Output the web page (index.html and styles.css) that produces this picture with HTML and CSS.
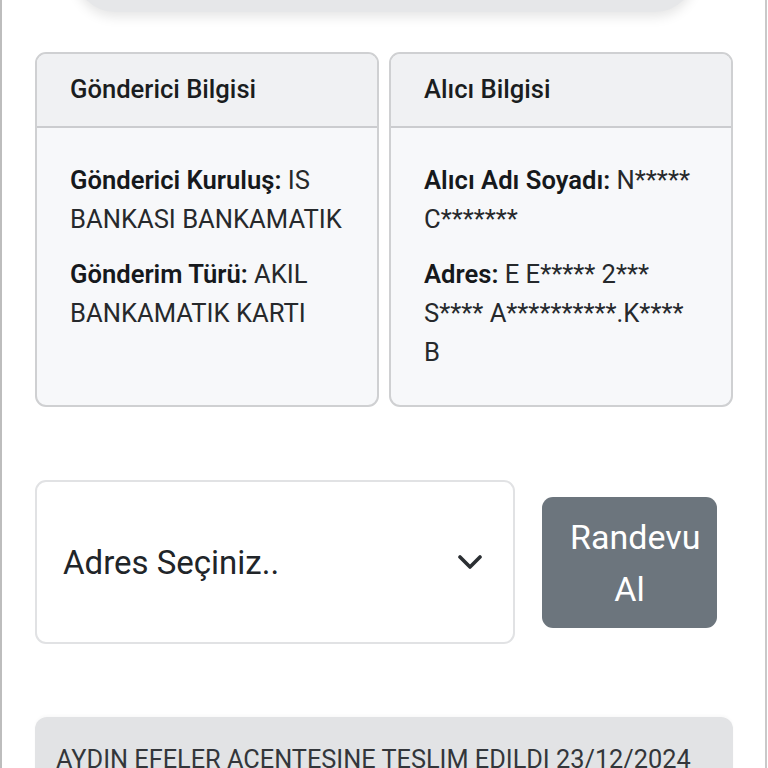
FILE: index.html
```html
<!DOCTYPE html>
<html lang="tr">
<head>
<meta charset="utf-8">
<title>Gönderi Bilgisi</title>
<link rel="stylesheet" href="styles.css">
</head>
<body>
<div class="frame">
  <div class="top-pill"></div>

  <div class="cards">
    <div class="card">
      <div class="card-header">Gönderici Bilgisi</div>
      <div class="card-body">
        <p><b>Gönderici Kuruluş:</b> IS BANKASI BANKAMATIK</p>
        <p><b>Gönderim Türü:</b> AKIL BANKAMATIK KARTI</p>
      </div>
    </div>
    <div class="card">
      <div class="card-header">Alıcı Bilgisi</div>
      <div class="card-body">
        <p><b>Alıcı Adı Soyadı:</b> N***** C*******</p>
        <p><b>Adres:</b> E E***** 2*** S**** A**********.K**** B</p>
      </div>
    </div>
  </div>

  <div class="form-row">
    <div class="select">
      <span class="select-text">Adres Seçiniz..</span>
      <svg class="chevron" width="24" height="15" viewBox="0 0 24 15" aria-hidden="true">
        <polyline points="2,2 12,12 22,2" fill="none" stroke="#2b2f33" stroke-width="3.6" stroke-linecap="round" stroke-linejoin="round"/>
      </svg>
    </div>
    <div class="btn">Randevu Al</div>
  </div>

  <div class="status">AYDIN EFELER ACENTESINE TESLIM EDILDI 23/12/2024</div>
</div>
</body>
</html>
```

FILE: styles.css
```css
html, body {
  margin: 0;
  padding: 0;
  background: #ffffff;
}

body {
  font-family: Roboto, "Liberation Sans", sans-serif;
  color: #212529;
  overflow: hidden;
}

.frame {
  display: flow-root;
  box-sizing: border-box;
  height: 768px;
  margin-right: 1px;
  border-left: 2px solid #bdbdbd;
  border-right: 2px solid #c9c9c9;
  padding: 0 32px 0 33px;
  background: #ffffff;
  overflow: hidden;
}

.top-pill {
  height: 80px;
  margin: -68px 38px 0 40px;
  border-radius: 40px;
  background: #e6e7e9;
  box-shadow: 0 5px 12px rgba(0, 0, 0, 0.10);
}

.cards {
  display: flex;
  gap: 10px;
  margin-top: 40px;
}

.card {
  flex: 1 1 0;
  display: flex;
  flex-direction: column;
  border: 2px solid #cfd0d2;
  border-radius: 11px;
  overflow: hidden;
  background: #f7f8fa;
}

.card-header {
  background: #f0f1f3;
  border-bottom: 2px solid #cbcccf;
  padding: 16px 33px 18px;
  font-size: 25.6px;
  line-height: 38.4px;
  font-weight: 500;
  color: #1a1d20;
}

.card-body {
  flex: 1;
  padding: 33px 33px 17px;
  font-size: 25.6px;
  line-height: 39px;
}

.card-body p {
  margin: 0 0 16px;
  font-weight: 400;
  color: #26292c;
}

.card-body b {
  font-weight: 600;
  color: #16191c;
}

.form-row {
  display: flex;
  align-items: center;
  gap: 27px;
  margin-top: 73px;
}

.select {
  width: 480px;
  height: 164px;
  box-sizing: border-box;
  border: 2px solid #e1e2e4;
  border-radius: 11px;
  background: #ffffff;
  display: flex;
  align-items: center;
  justify-content: space-between;
  padding: 0 31px 0 26px;
}

.select-text {
  font-size: 33px;
  color: #212529;
}

.chevron {
  display: block;
  margin-top: 1px;
}

.btn {
  width: 175px;
  height: 131px;
  box-sizing: border-box;
  padding: 14px 28px 0;
  background: #6c757d;
  border-radius: 11px;
  color: #ffffff;
  font-size: 34px;
  line-height: 52px;
  text-align: center;
}

.status {
  margin-top: 73px;
  background: #e2e3e5;
  border-radius: 12px;
  padding: 24px 21px 20px;
  font-size: 25.3px;
  line-height: 38.4px;
  color: #33363a;
  white-space: nowrap;
  box-shadow: 0 -2px 3px rgba(0, 0, 0, 0.025);
}
```
